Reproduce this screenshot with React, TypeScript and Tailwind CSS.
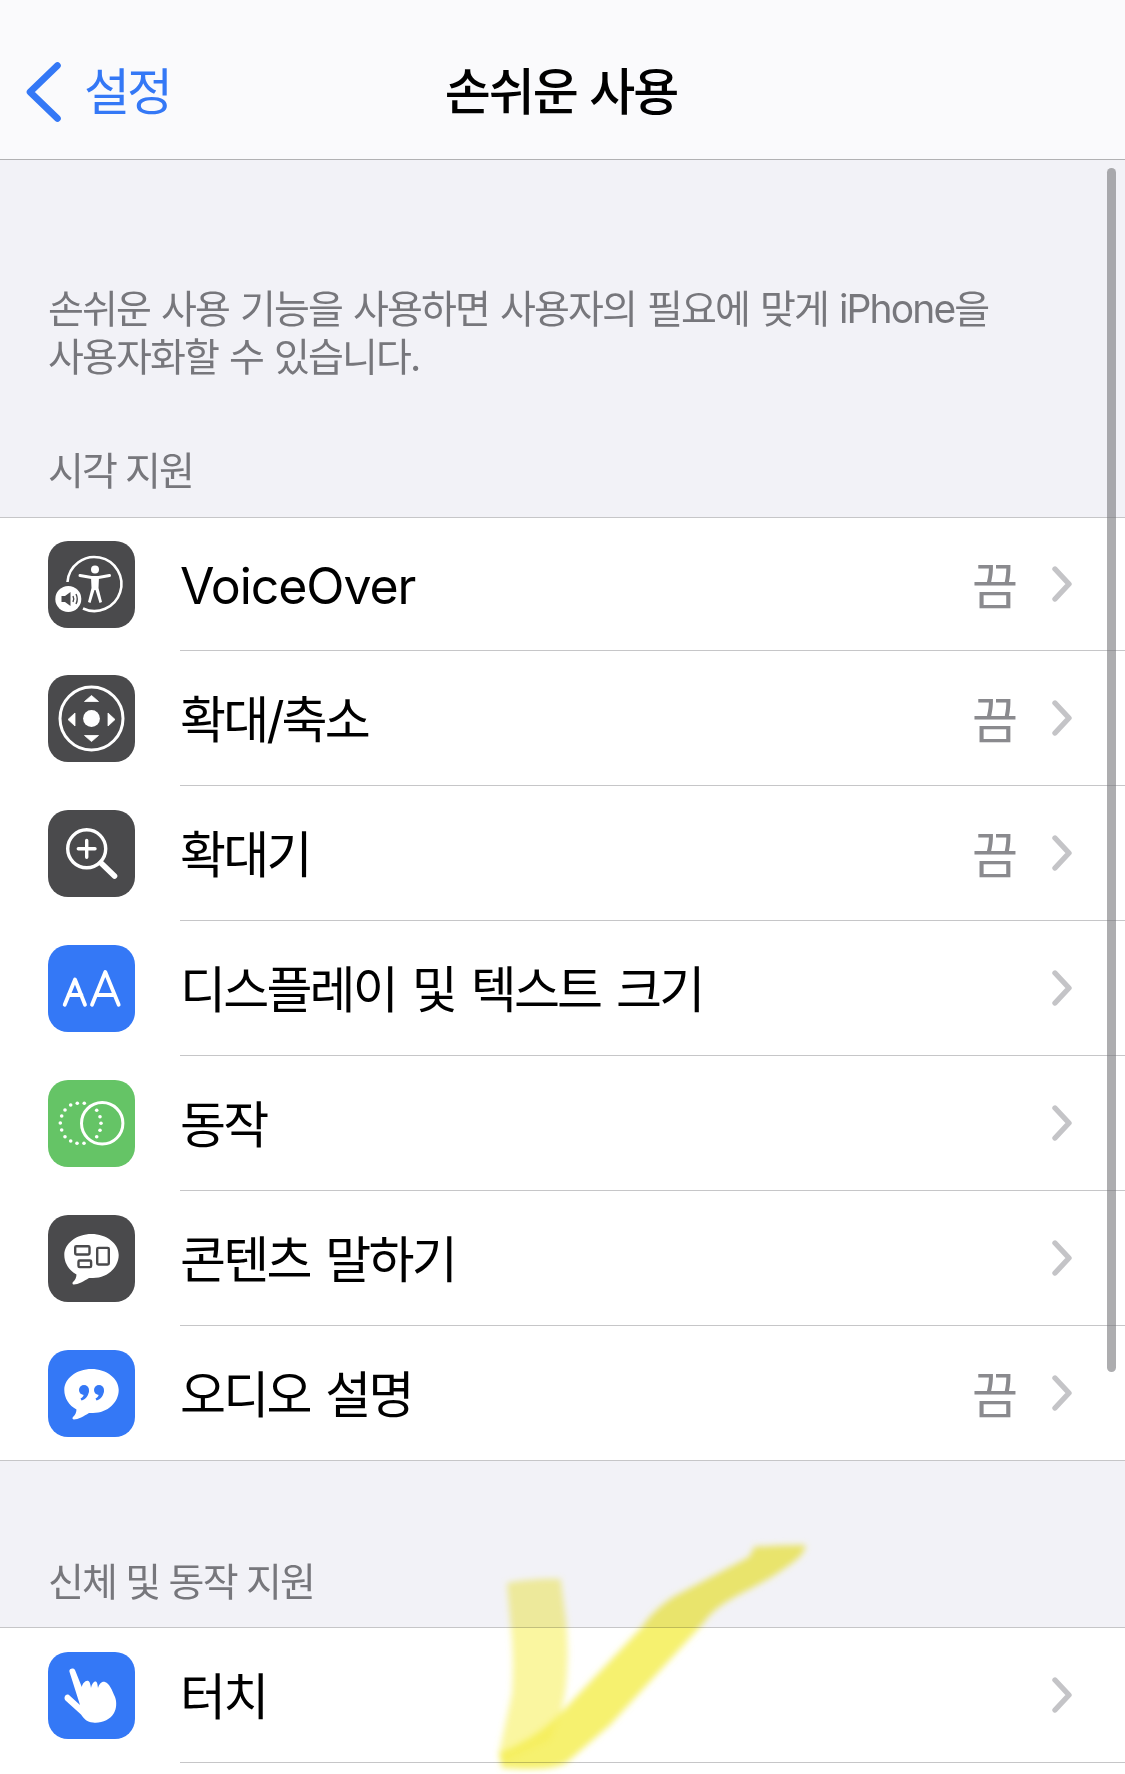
const font = { fontFamily: 'Inter, "Noto Sans CJK KR", sans-serif' };

function Tile({ color, children }: { color: string; children: React.ReactNode }) {
  return (
    <div className={`w-[87px] h-[87px] shrink-0 rounded-[20px] ${color}`}>
      <svg viewBox="0 0 87 87" className="w-[87px] h-[87px]">
        {children}
      </svg>
    </div>
  );
}

const VoiceOverIcon = () => (
  <Tile color="bg-[#4a4a4c]">
    <path d="M19.5 41 A27 27 0 1 1 35 67.5" fill="none" stroke="#fff" strokeWidth="2.6" />
    <circle cx="47" cy="28.5" r="4" fill="#fff" />
    <path d="M32 34.5 L43.5 36.5 H50.5 L61.5 34.5" fill="none" stroke="#fff" strokeWidth="3" strokeLinecap="round" />
    <path d="M43 36 H51 L50.5 47 L54 61 L51.5 62 L47.5 49 H46.5 L42.5 62 L40 61 L43.5 47 Z" fill="#fff" />
    <circle cx="20.3" cy="58" r="13" fill="#fff" />
    <path d="M13.5 55 H17 L22.5 51 V65 L17 61 H13.5 Z" fill="#4a4a4c" />
    <path d="M25 55 Q26.5 58 25 61 M28 53 Q30.5 58 28 63" fill="none" stroke="#4a4a4c" strokeWidth="1.4" />
  </Tile>
);

const ZoomIcon = () => (
  <Tile color="bg-[#4a4a4c]">
    <circle cx="43.5" cy="43.5" r="31.5" fill="none" stroke="#fff" strokeWidth="3" />
    <circle cx="43.5" cy="43.5" r="8.4" fill="#fff" />
    <path d="M43.5 20.5 L50.5 26.5 H36.5 Z M43.5 66.5 L50.5 60.5 H36.5 Z M20 44.5 L27 38 V51 Z M67 44.5 L60 38 V51 Z" fill="#fff" stroke="#fff" strokeWidth="0.8" strokeLinejoin="round" />
  </Tile>
);

const MagnifierIcon = () => (
  <Tile color="bg-[#4a4a4c]">
    <circle cx="38.7" cy="38.8" r="19" fill="none" stroke="#fff" strokeWidth="3.4" />
    <path d="M38.7 30.5 V47.2 M30.3 38.8 H47" stroke="#fff" strokeWidth="3.4" strokeLinecap="round" />
    <path d="M53 53 L66.5 66" stroke="#fff" strokeWidth="5.6" strokeLinecap="round" />
  </Tile>
);

const TextIcon = () => (
  <Tile color="bg-[#3478f6]">
    <path d="M16.7 59.7 L27 34.5 L37 59.7 M20.5 50 H33.5" fill="none" stroke="#fff" strokeWidth="3.8" strokeLinecap="round" strokeLinejoin="round" />
    <path d="M44 59.7 L57.3 27 L70.7 59.7 M48.5 50 H66" fill="none" stroke="#fff" strokeWidth="3.8" strokeLinecap="round" strokeLinejoin="round" />
  </Tile>
);

const motionDots: [number, number][] = [
  [29.3, 23.3], [22.7, 25], [17, 30], [36.3, 23.3], [13.7, 36], [12.3, 43], [13.7, 50], [17, 56.7],
  [22.7, 61], [29, 63.3], [36, 63.3], [48.7, 30.3], [52, 36.7], [53, 43.3], [52, 50.3], [48.7, 56.7],
];

const MotionIcon = () => (
  <Tile color="bg-[#65c466]">
    {motionDots.map(([cx, cy], i) => (
      <circle key={i} cx={cx} cy={cy} r="1.8" fill="#fff" />
    ))}
    <circle cx="54.2" cy="43.3" r="20.7" fill="none" stroke="#fff" strokeWidth="3" />
  </Tile>
);

const bubble = "M43.5 19 C58.5 19 70.7 28.5 70.7 40 C70.7 52 60 63 45 63 L41 63 C36 66 30 69.5 26 69.5 C24.5 69.5 24 68 25 67 C27 65.5 28.5 62 28.5 59.5 C21 55.5 16.3 48 16.3 40 C16.3 28.5 28.5 19 43.5 19 Z";

const SpeechIcon = () => (
  <Tile color="bg-[#4a4a4c]">
    <path d={bubble} fill="#fff" />
    <rect x="27.2" y="31.2" width="14.3" height="8.3" rx="1.2" fill="none" stroke="#4a4a4c" strokeWidth="2.4" />
    <rect x="30.5" y="45.5" width="12.6" height="6.6" rx="1.2" fill="none" stroke="#4a4a4c" strokeWidth="2.4" />
    <rect x="49.2" y="32.9" width="11.6" height="16.6" rx="1.2" fill="none" stroke="#4a4a4c" strokeWidth="2.4" />
  </Tile>
);

const AudioIcon = () => (
  <Tile color="bg-[#3478f6]">
    <path d={bubble} fill="#fff" />
    <circle cx="36" cy="40" r="5" fill="#3478f6" />
    <path d="M41 40 C41 45.5 37.5 49.5 33.5 50.5 L32.5 48.5 C35 47.5 36 45 36 43 Z" fill="#3478f6" />
    <circle cx="51" cy="40" r="5" fill="#3478f6" />
    <path d="M56 40 C56 45.5 52.5 49.5 48.5 50.5 L47.5 48.5 C50 47.5 51 45 51 43 Z" fill="#3478f6" />
  </Tile>
);

const TouchIcon = () => (
  <Tile color="bg-[#3478f6]">
    <path d="M21.4 19.5 C20.8 16.5 26 15 27.2 18.5 L33.8 35 C34.5 31 38 27.5 40.5 29 C42 30 42.5 33 43 36 C44 31.5 46.5 28.5 48.5 30 C49.5 31 49.5 33 50 36 C51 32 54 29 57 30 C61.5 31.5 64 38 67 45 C69 50 68.5 57 66 61 C62 68 53 71.5 45 70.5 C39 70 36.5 67.5 33 62.5 L17.5 48.5 C15 45.5 18 41 21 43 L32 53 Z" fill="#fff" />
  </Tile>
);

const rows = [
  { label: "VoiceOver", icon: <VoiceOverIcon />, off: true },
  { label: "확대/축소", icon: <ZoomIcon />, off: true },
  { label: "확대기", icon: <MagnifierIcon />, off: true },
  { label: "디스플레이 및 텍스트 크기", icon: <TextIcon />, off: false },
  { label: "동작", icon: <MotionIcon />, off: false },
  { label: "콘텐츠 말하기", icon: <SpeechIcon />, off: false },
  { label: "오디오 설명", icon: <AudioIcon />, off: true },
];

function Row({ label, icon, off, height, last }: { label: string; icon: React.ReactNode; off: boolean; height: string; last: boolean }) {
  return (
    <div className={`flex items-stretch pl-[48px] ${height}`}>
      <div className="flex items-center pr-[45px]">{icon}</div>
      <div className={`flex flex-1 items-center justify-between pr-[53px] ${last ? "" : "border-b border-[#c6c6c8]"}`}>
        <span className={`pt-[4px] text-[50px] leading-none text-black [word-spacing:4.5px] ${label === "VoiceOver" ? "tracking-[-1.1px]" : "tracking-[-2.8px]"}`}>{label}</span>
        <div className="flex items-center gap-[34px]">
          {off && <span className="pt-[5px] text-[50px] leading-none text-[#8a8a8e]">끔</span>}
          <svg viewBox="0 0 20 36" className="w-[20px] h-[36px]">
            <path d="M3 3 L17 18 L3 33" fill="none" stroke="#c4c4c7" strokeWidth="5.4" strokeLinecap="round" strokeLinejoin="round" />
          </svg>
        </div>
      </div>
    </div>
  );
}

export default function App() {
  return (
    <div className="relative w-[1125px] h-[1774px] overflow-hidden bg-[#f2f2f7]" style={font}>
      {/* Nav bar */}
      <header className="relative flex items-center h-[160px] pt-[24px] pl-[26px] bg-[#fafafc] border-b border-[#b1b1b3]">
        <svg viewBox="0 0 36 60" className="w-[36px] h-[60px] mr-[22px]">
          <path d="M31.5 3.5 L4 30 L31.5 56.5" fill="none" stroke="#3478f6" strokeWidth="6.6" strokeLinecap="round" strokeLinejoin="round" />
        </svg>
        <span className="text-[50px] tracking-[-3px] leading-none text-[#3478f6]">설정</span>
        <h1 className="absolute left-0 right-0 top-[24px] bottom-0 flex items-center justify-center pr-[3px] text-[50px] font-medium tracking-[-2px] [word-spacing:1px] leading-none text-black">
          손쉬운 사용
        </h1>
      </header>

      {/* Intro */}
      <p className="mt-[125px] pl-[48px] text-[39px] tracking-[-1.9px] [word-spacing:2px] leading-[48px] text-[#77777c]">
        손쉬운 사용 기능을 사용하면 사용자의 필요에 맞게 iPhone을
        <br />
        사용자화할 수 있습니다.
      </p>

      {/* 시각 지원 */}
      <div className="mt-[66px] h-[48px] pl-[48px] text-[39px] tracking-[-1.9px] leading-[48px] text-[#77777c]">시각 지원</div>
      <section className="mt-[22px] bg-white border-y border-[#c6c6c8]">
        <Row {...rows[0]} height="h-[133px]" last={false} />
        {rows.slice(1, -1).map((row) => (
          <Row key={row.label} {...row} height="h-[135px]" last={false} />
        ))}
        <Row {...rows[rows.length - 1]} height="h-[134px]" last={true} />
      </section>

      {/* 신체 및 동작 지원 */}
      <div className="mt-[97px] h-[48px] pl-[48px] text-[39px] tracking-[-1.8px] leading-[48px] text-[#77777c]">신체 및 동작 지원</div>
      <section className="mt-[21px] bg-white border-t border-[#c6c6c8] h-[150px]">
        <Row label="터치" icon={<TouchIcon />} off={false} height="h-[135px]" last={false} />
      </section>

      {/* Scroll indicator */}
      <div className="absolute left-[1107px] top-[168px] w-[9px] h-[1204px] rounded-full bg-[#777779]/60" />

      {/* Hand-drawn check mark */}
      <svg viewBox="0 0 1125 1774" className="absolute inset-0 w-[1125px] h-[1774px] mix-blend-multiply pointer-events-none">
        <defs>
          <filter id="soft" x="-10%" y="-10%" width="120%" height="120%">
            <feGaussianBlur stdDeviation="3" />
          </filter>
        </defs>
        <g filter="url(#soft)">
          <path d="M507 1583 C522 1580 545 1578 560.6 1579 L566 1620 C568 1640 568 1660 567 1673 C566 1690 564 1700 560.6 1713 L550 1740 L502 1762 L499 1753 L512 1693 C513 1675 513 1655 512 1640 Z" fill="#f6f060" fillOpacity="0.6" />
          <path d="M754.5 1546.7 C770 1546 790 1545 805.5 1545 C805 1552 800 1558 785 1568 C765 1583 735 1595 719 1607 C712 1612 707 1618 703.5 1623 L610 1725 L566 1763 C555 1768 545 1769 525 1769 C512 1769 505 1768 502 1768 L499 1753 C520 1745 545 1730 560.6 1713 L642 1627 C650 1615 660 1606 673 1597 L749 1557 Z" fill="#f5ef55" fillOpacity="0.85" />
        </g>
      </svg>
    </div>
  );
}
